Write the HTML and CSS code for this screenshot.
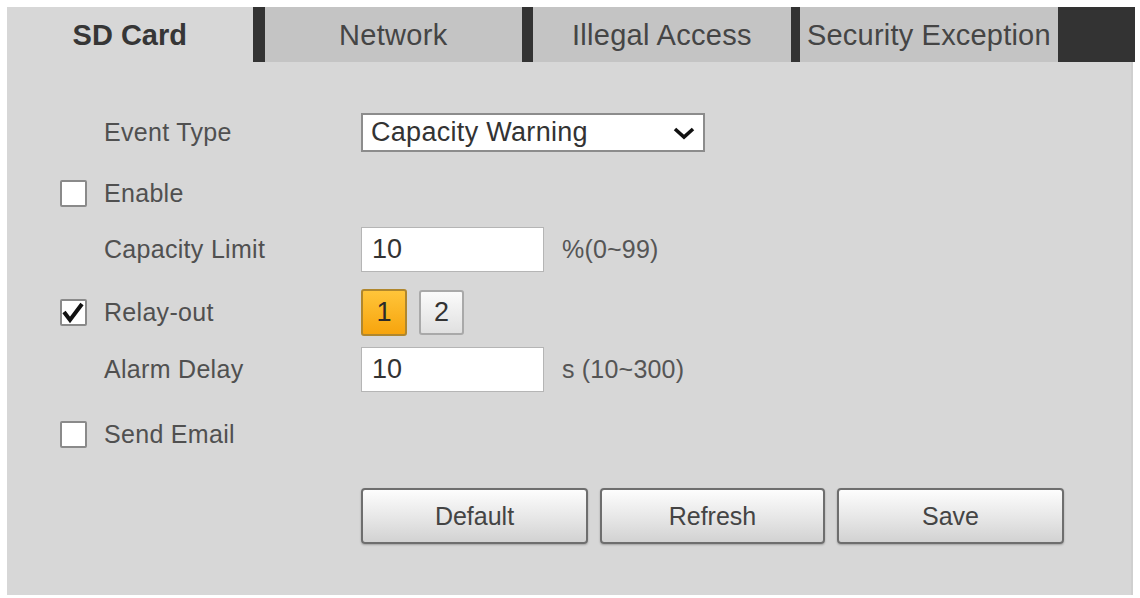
FILE: index.html
```html
<!DOCTYPE html>
<html lang="en">
<head>
<meta charset="utf-8">
<title>SD Card</title>
<link rel="stylesheet" href="styles.css">
</head>
<body>
<div class="panel">
  <div class="tabs">
    <div class="tab tab-active">SD Card</div>
    <div class="tab tab-net">Network</div>
    <div class="tab tab-ill">Illegal Access</div>
    <div class="tab tab-sec">Security Exception</div>
    <div class="tab-fill"></div>
  </div>
  <div class="form">
    <div class="row row-1">
      <span class="cb-slot"></span>
      <span class="label">Event Type</span>
      <div class="select">
        <span>Capacity Warning</span>
        <svg class="chev" width="22" height="14" viewBox="0 0 22 14"><path d="M2 3 L11 11 L20 3" fill="none" stroke="#111" stroke-width="3.6"/></svg>
      </div>
    </div>
    <div class="row row-2">
      <span class="cb-slot"><span class="cb"></span></span>
      <span class="label">Enable</span>
    </div>
    <div class="row row-3">
      <span class="cb-slot"></span>
      <span class="label">Capacity Limit</span>
      <div class="input">10</div>
      <span class="hint">%(0~99)</span>
    </div>
    <div class="row row-4">
      <span class="cb-slot"><span class="cb"><svg width="24" height="22" viewBox="0 0 24 22"><path d="M3 10 L9 18 L21 2" fill="none" stroke="#111" stroke-width="4" stroke-linejoin="miter"/></svg></span></span>
      <span class="label">Relay-out</span>
      <div class="relays">
        <span class="relay relay-on">1</span>
        <span class="relay">2</span>
      </div>
    </div>
    <div class="row row-5">
      <span class="cb-slot"></span>
      <span class="label">Alarm Delay</span>
      <div class="input">10</div>
      <span class="hint">s (10~300)</span>
    </div>
    <div class="row row-6">
      <span class="cb-slot"><span class="cb"></span></span>
      <span class="label">Send Email</span>
    </div>
    <div class="actions">
      <span class="btn">Default</span>
      <span class="btn btn-mid">Refresh</span>
      <span class="btn">Save</span>
    </div>
  </div>
</div>
</body>
</html>
```

FILE: styles.css
```css
html, body {
  margin: 0;
  padding: 0;
  background: #ffffff;
}
body {
  font-family: "Liberation Sans", Arial, sans-serif;
  padding: 7px 0 0 7px;
}
.panel {
  width: 1126px;
  height: 588px;
  background: #d7d7d7;
  border-right: 2px solid #cfcfcf;
  box-sizing: border-box;
  display: flex;
  flex-direction: column;
}
.tabs {
  display: flex;
  height: 55px;
  flex: none;
}
.tab {
  display: flex;
  align-items: center;
  justify-content: center;
  font-size: 29px;
  letter-spacing: 0.3px;
  color: #454545;
  background: #c4c4c4;
  box-sizing: border-box;
  padding-top: 2px;
}
.tab-active {
  width: 246px;
  background: #d7d7d7;
  color: #363636;
  font-weight: bold;
  letter-spacing: 0;
}
.tab-net {
  width: 270px;
  border-left: 12px solid #333333;
}
.tab-ill {
  width: 269px;
  border-left: 11px solid #333333;
}
.tab-sec {
  width: 268px;
  border-left: 9px solid #333333;
  letter-spacing: 0.2px;
}
.tab-fill {
  width: 77px;
  margin-right: -4px;
  background: #333333;
}
.form {
  padding: 51px 0 0 53px;
  display: flex;
  flex-direction: column;
}
.row {
  display: flex;
  align-items: center;
}
.row-1 { height: 39px; }
.row-2 { height: 28px; margin-top: 27px; }
.row-3 { height: 45px; margin-top: 20px; }
.row-4 { height: 47px; margin-top: 17px; }
.row-5 { height: 45px; margin-top: 11px; }
.row-6 { height: 28px; margin-top: 28px; }
.cb-slot {
  width: 44px;
  flex: none;
  display: flex;
  align-items: center;
}
.cb {
  width: 27px;
  height: 27px;
  box-sizing: border-box;
  border: 2px solid #8a8a8a;
  border-radius: 2px;
  background: #ffffff;
  display: flex;
  align-items: center;
  justify-content: center;
}
.cb svg {
  display: block;
  margin-left: -1px;
}
.label {
  width: 257px;
  flex: none;
  font-size: 25px;
  letter-spacing: 0.3px;
  color: #505050;
}
.select {
  width: 344px;
  height: 39px;
  box-sizing: border-box;
  border: 2px solid #8c8c8c;
  background: #ffffff;
  display: flex;
  align-items: center;
  justify-content: space-between;
  padding: 0 8px 0 8px;
  font-size: 27px;
  letter-spacing: 0.3px;
  color: #333333;
}
.chev {
  display: block;
}
.input {
  width: 183px;
  height: 45px;
  box-sizing: border-box;
  border: 1px solid #b5b5b5;
  background: #ffffff;
  display: flex;
  align-items: center;
  padding-left: 10px;
  font-size: 27px;
  color: #333333;
}
.hint {
  margin-left: 18px;
  font-size: 25px;
  letter-spacing: 0.2px;
  color: #555555;
}
.relays {
  display: flex;
  gap: 12px;
  align-items: center;
}
.relay {
  width: 45px;
  height: 45px;
  box-sizing: border-box;
  border: 2px solid #a9a9a9;
  border-radius: 3px;
  background: linear-gradient(#fbfbfb, #e0e0e0);
  display: flex;
  align-items: center;
  justify-content: center;
  font-size: 27px;
  color: #333333;
}
.relay-on {
  width: 46px;
  height: 47px;
  border-color: #b0872d;
  background: linear-gradient(#ffc53a, #f7a40d);
  color: #2a2a2a;
}
.actions {
  display: flex;
  margin-top: 40px;
  margin-left: 301px;
  gap: 12px;
}
.btn {
  width: 227px;
  height: 56px;
  box-sizing: border-box;
  border: 2px solid #6e6e6e;
  border-radius: 4px;
  background: linear-gradient(#fdfdfd, #e6e6e6 55%, #d2d2d2);
  box-shadow: 0 1px 2px rgba(0,0,0,0.25);
  display: flex;
  align-items: center;
  justify-content: center;
  font-size: 25px;
  color: #444444;
}
.btn-mid {
  width: 225px;
}
```
